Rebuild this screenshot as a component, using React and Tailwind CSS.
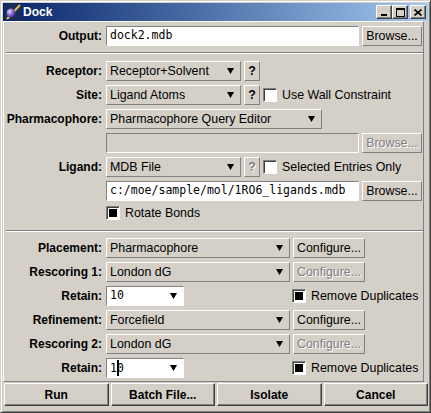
import React from 'react';

const raised = "border border-t-white border-l-white border-b-[#808080] border-r-[#808080] bg-[#d4d0c8]";
const raised2 = "border border-t-white border-l-white border-b-[#404040] border-r-[#404040] shadow-[inset_-1px_-1px_0_#808080] bg-[#d4d0c8]";
const sunken = "border border-t-[#808080] border-l-[#808080] border-b-white border-r-white";
const mono = "font-['DejaVu_Sans_Mono',monospace] text-[11.5px]";
const disabledText = "text-[#808080] [text-shadow:1px_1px_0_#fff]";

const Arrow = () => (
  <svg width="7" height="6" viewBox="0 0 7 6" className="shrink-0">
    <path d="M0 0h7L3.5 6z" fill="#000" />
  </svg>
);

const Combo = ({ value, width, white, isMono, caret }) => (
  <div
    className={
      white
        ? `flex h-5 items-center justify-between bg-white pl-[3px] pr-[6px] ${sunken} ${width}`
        : `flex h-5 items-center justify-between pl-[3px] pr-[6px] ${raised} ${width}`
    }
  >
    <span className={isMono ? mono : ""}>
      {caret ? (
        <>
          1<span className="-mr-[2px] inline-block h-4 w-[2px] bg-black align-middle" />0
        </>
      ) : (
        value
      )}
    </span>
    <Arrow />
  </div>
);

const Btn = ({ children, width, disabled }) => (
  <div className={`flex h-5 items-center justify-center ${raised} ${width} ${disabled ? disabledText : ""}`}>
    {children}
  </div>
);

const Check = ({ checked }) => (
  <div className={`flex h-[14px] w-[14px] shrink-0 items-center justify-center bg-white shadow-[inset_1px_1px_0_#404040] ${sunken}`}>
    {checked && <div className="h-[8px] w-[8px] bg-black" />}
  </div>
);

const Row = ({ label, children, className = "" }) => (
  <div className={`flex h-5 items-center ${className}`}>
    <div className="w-[98px] shrink-0 text-right text-[12px] font-bold">{label}</div>
    <div className="ml-[4px] flex items-center gap-[3px]">{children}</div>
  </div>
);

const Separator = ({ className }) => (
  <div className={`ml-[2px] h-[2px] border-t border-b border-t-[#808080] border-b-white ${className}`} />
);

const TitleIcon = () => (
  <svg width="16" height="16" viewBox="0 0 16 16">
    <defs>
      <radialGradient id="ball" cx="0.35" cy="0.35" r="0.7">
        <stop offset="0" stopColor="#e8e0ff" />
        <stop offset="0.4" stopColor="#9a7ee0" />
        <stop offset="1" stopColor="#3a2080" />
      </radialGradient>
    </defs>
    <rect width="16" height="16" fill="#1c2c58" />
    <line x1="2" y1="15" x2="15" y2="1" stroke="#e8c040" strokeWidth="2" />
    <circle cx="6" cy="9" r="4.5" fill="url(#ball)" />
  </svg>
);

const TitleBtn = ({ children, className = "" }) => (
  <div className={`flex h-[14px] w-[16px] items-center justify-center ${raised2} ${className}`}>{children}</div>
);

export default function App() {
  return (
    <div className="h-[413px] w-[431px] border border-t-[#d4d0c8] border-l-[#d4d0c8] border-b-[#404040] border-r-[#404040] bg-[#d4d0c8] p-[2px] font-['Liberation_Sans',Arial,sans-serif] text-[12.4px] leading-none text-black shadow-[inset_1px_1px_0_#fff,inset_-1px_-1px_0_#808080]">
      <div className="flex h-[18px] items-center bg-gradient-to-r from-[#0a246a] to-[#a6caf0] pl-[2px] pr-[2px]">
        <TitleIcon />
        <span className="ml-[2px] text-[12px] font-bold text-white">Dock</span>
        <div className="ml-auto flex items-center">
          <TitleBtn>
            <div className="mt-[6px] h-[2px] w-[6px] bg-black" />
          </TitleBtn>
          <TitleBtn>
            <div className="h-[9px] w-[9px] border border-t-2 border-black" />
          </TitleBtn>
          <TitleBtn className="ml-[2px]">
            <svg width="8" height="7" viewBox="0 0 8 7">
              <path d="M0.5 0.5L7.5 6.5M7.5 0.5L0.5 6.5" stroke="#000" strokeWidth="1.6" />
            </svg>
          </TitleBtn>
        </div>
      </div>

      <div className={`flex h-[361px] w-[421px] flex-col pt-[4px] ${raised}`}>
        <Row label="Output:">
          <div className={`flex h-5 w-[253px] items-center bg-white pl-[3px] ${sunken} ${mono}`}>dock2.mdb</div>
          <Btn width="w-[60px]">Browse...</Btn>
        </Row>

        <Separator className="mt-[6px]" />

        <Row label="Receptor:" className="mt-[7px]">
          <Combo value="Receptor+Solvent" width="w-[135px]" />
          <Btn width="w-[16px]">
            <span className="font-bold">?</span>
          </Btn>
        </Row>
        <Row label="Site:" className="mt-[4px]">
          <Combo value="Ligand Atoms" width="w-[135px]" />
          <Btn width="w-[16px]">
            <span className="font-bold">?</span>
          </Btn>
          <Check />
          <span className="ml-[2px]">Use Wall Constraint</span>
        </Row>
        <Row label="Pharmacophore:" className="mt-[4px]">
          <Combo value="Pharmacophore Query Editor" width="w-[216px]" />
        </Row>
        <Row label="" className="mt-[4px]">
          <div className={`h-5 w-[253px] bg-[#d4d0c8] ${sunken}`} />
          <Btn width="w-[60px]" disabled>
            Browse...
          </Btn>
        </Row>
        <Row label="Ligand:" className="mt-[4px]">
          <Combo value="MDB File" width="w-[135px]" />
          <Btn width="w-[16px]" disabled>
            <span className="font-bold">?</span>
          </Btn>
          <Check />
          <span className="ml-[2px]">Selected Entries Only</span>
        </Row>
        <Row label="" className="mt-[4px]">
          <div className={`flex h-5 w-[253px] items-center bg-white pl-[3px] ${sunken} ${mono}`}>
            c:/moe/sample/mol/1RO6_ligands.mdb
          </div>
          <Btn width="w-[60px]">Browse...</Btn>
        </Row>
        <div className="mt-[4px] flex h-4 items-center pl-[102px]">
          <Check checked />
          <span className="ml-[5px]">Rotate Bonds</span>
        </div>

        <Separator className="mt-[9px]" />

        <Row label="Placement:" className="mt-[6px]">
          <Combo value="Pharmacophore" width="w-[184px]" />
          <Btn width="w-[72px]">Configure...</Btn>
        </Row>
        <Row label="Rescoring 1:" className="mt-[4px]">
          <Combo value="London dG" width="w-[184px]" />
          <Btn width="w-[72px]" disabled>
            Configure...
          </Btn>
        </Row>
        <Row label="Retain:" className="mt-[4px]">
          <Combo value="10" width="w-[78px]" white isMono />
          <div className="ml-[105px] flex items-center">
            <Check checked />
            <span className="ml-[5px]">Remove Duplicates</span>
          </div>
        </Row>
        <Row label="Refinement:" className="mt-[4px]">
          <Combo value="Forcefield" width="w-[184px]" />
          <Btn width="w-[72px]">Configure...</Btn>
        </Row>
        <Row label="Rescoring 2:" className="mt-[4px]">
          <Combo value="London dG" width="w-[184px]" />
          <Btn width="w-[72px]" disabled>
            Configure...
          </Btn>
        </Row>
        <Row label="Retain:" className="mt-[4px]">
          <Combo value="10" width="w-[78px]" white isMono caret />
          <div className="ml-[105px] flex items-center">
            <Check checked />
            <span className="ml-[5px]">Remove Duplicates</span>
          </div>
        </Row>
      </div>

      <div className="mt-[1px] ml-[1px] grid h-[23px] grid-cols-4 gap-[2px] text-[12px] font-bold">
        {["Run", "Batch File...", "Isolate", "Cancel"].map((label) => (
          <div key={label} className={`flex items-center justify-center ${raised2}`}>
            {label}
          </div>
        ))}
      </div>
    </div>
  );
}
